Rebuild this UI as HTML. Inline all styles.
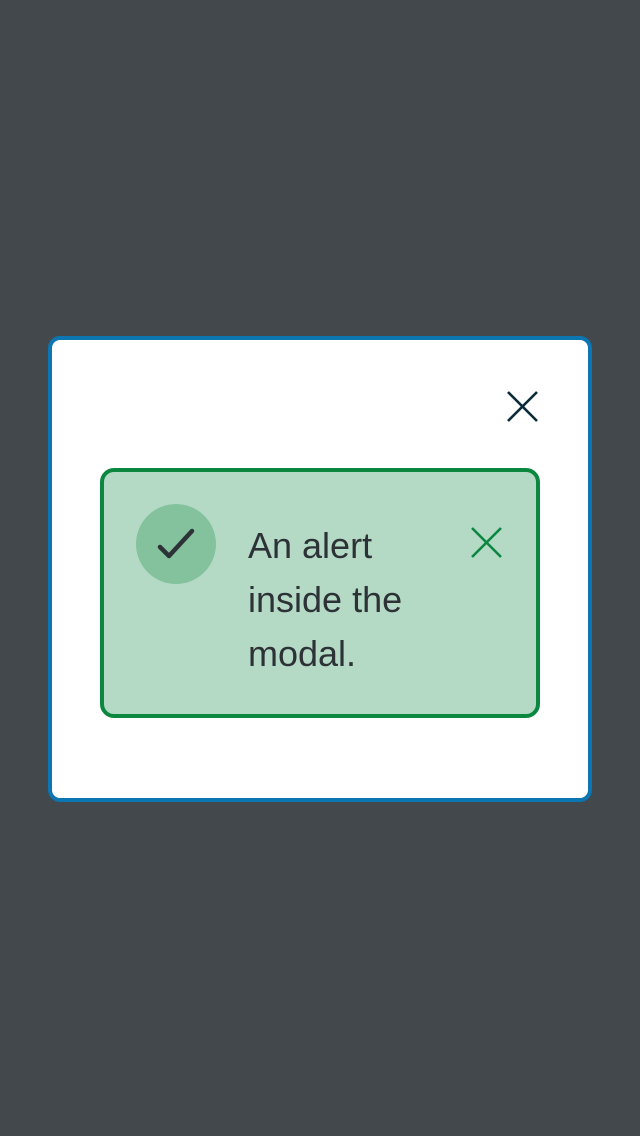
<!DOCTYPE html>
<html><head><style>
html,body{margin:0;padding:0;width:640px;height:1136px;background:#43484c;overflow:hidden;font-family:"Liberation Sans",sans-serif}
.modal{position:absolute;left:48px;top:336px;width:536px;height:458px;background:#fff;border:4px solid #0b76b2;border-radius:12px}
.alert{position:absolute;left:100px;top:468px;width:432px;height:242px;background:#b4dac6;border:4px solid #0b873f;border-radius:14px}
.circ{position:absolute;left:136px;top:504px;width:80px;height:80px;border-radius:50%;background:#84c29e}
.txt{position:absolute;left:248px;top:519px;font-size:36px;line-height:54px;color:#2d3236;width:200px}
svg{position:absolute}
</style></head><body>
<div class="modal"></div>
<svg style="left:505px;top:389px" width="34" height="34" viewBox="0 0 34 34"><path d="M3 3L32 32M32 3L3 32" stroke="#0b2a3a" stroke-width="2.6" fill="none"/></svg>
<div class="alert"></div>
<div class="circ"></div>
<svg style="left:156px;top:528px" width="40" height="36" viewBox="0 0 40 36"><path d="M4 19L13 28L36 3" stroke="#2d3236" stroke-width="4.5" fill="none" stroke-linecap="round" stroke-linejoin="round"/></svg>
<div class="txt">An alert inside the modal.</div>
<svg style="left:469px;top:525px" width="34" height="34" viewBox="0 0 34 34"><path d="M3 3L32 32M32 3L3 32" stroke="#0b873f" stroke-width="2.6" fill="none"/></svg>
</body></html>
